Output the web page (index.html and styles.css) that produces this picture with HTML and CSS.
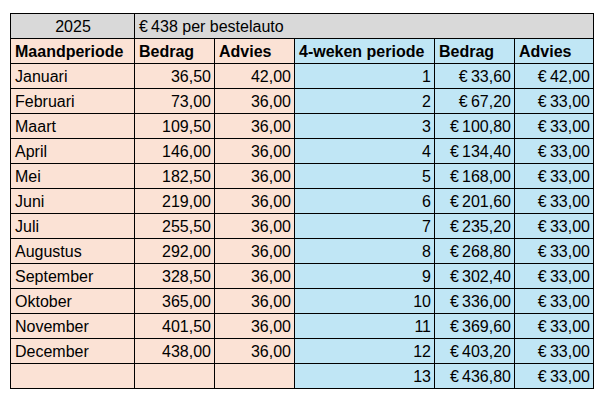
FILE: index.html
```html
<!DOCTYPE html>
<html lang="nl">
<head>
<meta charset="utf-8">
<title>Bestelauto 2025</title>
<link rel="stylesheet" href="styles.css">
</head>
<body>
<table class="sheet">
  <colgroup>
    <col class="c-month"><col class="c-num"><col class="c-num"><col class="c-period"><col class="c-num"><col class="c-last">
  </colgroup>
  <tbody>
    <tr class="title">
      <td class="center">2025</td>
      <td colspan="5">€&#8239;438 per bestelauto</td>
    </tr>
    <tr class="head">
      <td class="m">Maandperiode</td><td class="m">Bedrag</td><td class="m">Advies</td>
      <td class="w">4-weken periode</td><td class="w">Bedrag</td><td class="w">Advies</td>
    </tr>
    <tr><td class="m">Januari</td><td class="m r">36,50</td><td class="m r">42,00</td><td class="w r">1</td><td class="w r">€&#8239;33,60</td><td class="w r">€&#8239;42,00</td></tr>
    <tr><td class="m">Februari</td><td class="m r">73,00</td><td class="m r">36,00</td><td class="w r">2</td><td class="w r">€&#8239;67,20</td><td class="w r">€&#8239;33,00</td></tr>
    <tr><td class="m">Maart</td><td class="m r">109,50</td><td class="m r">36,00</td><td class="w r">3</td><td class="w r">€&#8239;100,80</td><td class="w r">€&#8239;33,00</td></tr>
    <tr><td class="m">April</td><td class="m r">146,00</td><td class="m r">36,00</td><td class="w r">4</td><td class="w r">€&#8239;134,40</td><td class="w r">€&#8239;33,00</td></tr>
    <tr><td class="m">Mei</td><td class="m r">182,50</td><td class="m r">36,00</td><td class="w r">5</td><td class="w r">€&#8239;168,00</td><td class="w r">€&#8239;33,00</td></tr>
    <tr><td class="m">Juni</td><td class="m r">219,00</td><td class="m r">36,00</td><td class="w r">6</td><td class="w r">€&#8239;201,60</td><td class="w r">€&#8239;33,00</td></tr>
    <tr><td class="m">Juli</td><td class="m r">255,50</td><td class="m r">36,00</td><td class="w r">7</td><td class="w r">€&#8239;235,20</td><td class="w r">€&#8239;33,00</td></tr>
    <tr><td class="m">Augustus</td><td class="m r">292,00</td><td class="m r">36,00</td><td class="w r">8</td><td class="w r">€&#8239;268,80</td><td class="w r">€&#8239;33,00</td></tr>
    <tr><td class="m">September</td><td class="m r">328,50</td><td class="m r">36,00</td><td class="w r">9</td><td class="w r">€&#8239;302,40</td><td class="w r">€&#8239;33,00</td></tr>
    <tr><td class="m">Oktober</td><td class="m r">365,00</td><td class="m r">36,00</td><td class="w r">10</td><td class="w r">€&#8239;336,00</td><td class="w r">€&#8239;33,00</td></tr>
    <tr><td class="m">November</td><td class="m r">401,50</td><td class="m r">36,00</td><td class="w r">11</td><td class="w r">€&#8239;369,60</td><td class="w r">€&#8239;33,00</td></tr>
    <tr><td class="m">December</td><td class="m r">438,00</td><td class="m r">36,00</td><td class="w r">12</td><td class="w r">€&#8239;403,20</td><td class="w r">€&#8239;33,00</td></tr>
    <tr><td class="m"></td><td class="m"></td><td class="m"></td><td class="w r">13</td><td class="w r">€&#8239;436,80</td><td class="w r">€&#8239;33,00</td></tr>
  </tbody>
</table>
</body>
</html>
```

FILE: styles.css
```css
html, body {
  margin: 0;
  background: #ffffff;
}

body {
  padding: 13px 0 0 10px;
  font-family: "Liberation Sans", Arial, sans-serif;
  font-size: 16px;
  color: #000000;
}

.sheet {
  border-collapse: collapse;
  table-layout: fixed;
  width: 584px;
}

.c-month { width: 124px; }
.c-num { width: 80px; }
.c-period { width: 140px; }
.c-last { width: 79px; }

.sheet td {
  border: 1px solid #000000;
  height: 22px;
  padding: 2px 3px 0 4px;
  line-height: 22px;
  white-space: nowrap;
  overflow: hidden;
  vertical-align: middle;
}

.title td {
  background: #d9d9d9;
}

.head td {
  font-weight: bold;
}

.center { text-align: center; }
.r { text-align: right; padding-left: 2px; padding-right: 2px; }

.m { background: #fbe2d5; }
.w { background: #c0e6f5; }
```
